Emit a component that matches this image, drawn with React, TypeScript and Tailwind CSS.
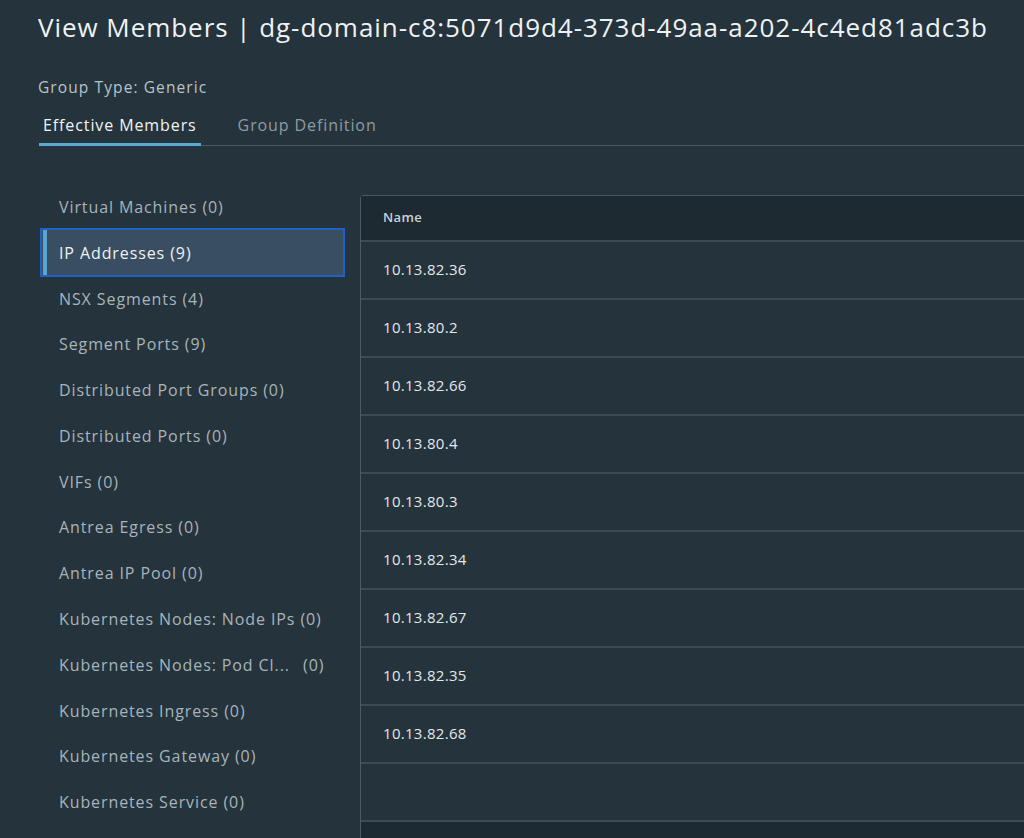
import React from 'react';

const categories = [
  { label: 'Virtual Machines', count: 0 },
  { label: 'IP Addresses', count: 9 },
  { label: 'NSX Segments', count: 4 },
  { label: 'Segment Ports', count: 9 },
  { label: 'Distributed Port Groups', count: 0 },
  { label: 'Distributed Ports', count: 0 },
  { label: 'VIFs', count: 0 },
  { label: 'Antrea Egress', count: 0 },
  { label: 'Antrea IP Pool', count: 0 },
  { label: 'Kubernetes Nodes: Node IPs', count: 0 },
  { label: 'Kubernetes Nodes: Pod Cl...', count: 0, truncated: true },
  { label: 'Kubernetes Ingress', count: 0 },
  { label: 'Kubernetes Gateway', count: 0 },
  { label: 'Kubernetes Service', count: 0 },
];

const addresses = [
  '10.13.82.36',
  '10.13.80.2',
  '10.13.82.66',
  '10.13.80.4',
  '10.13.80.3',
  '10.13.82.34',
  '10.13.82.67',
  '10.13.82.35',
  '10.13.82.68',
];

const App: React.FC = () => {
  const selected = 1;

  return (
    <div
      className="h-[838px] w-[1024px] overflow-hidden bg-[#25333c] text-[#e6ebee]"
      style={{ fontFamily: '"Open Sans", "Noto Sans", sans-serif' }}
    >
      {/* タイトル */}
      <h1 className="pl-[38px] pt-[9px] text-[26px] leading-[36px] font-normal tracking-[0.95px] text-[#eef2f4]">
        View Members | dg-domain-c8:5071d9d4-373d-49aa-a202-4c4ed81adc3b
      </h1>

      <div className="pl-[38px] mt-[32px] text-[15.5px] leading-[20px] tracking-[1.1px] text-[#b9c3c9]">
        Group Type: Generic
      </div>

      {/* タブ */}
      <div className="ml-[39px] mt-[17px] flex border-b border-[#4a5963]">
        <div className="-mb-px border-b-[3px] border-[#5aaad8] px-[4px] pb-[7px] text-[16px] leading-[22px] tracking-[0.9px] text-[#f0f3f5]">
          Effective Members
        </div>
        <div className="ml-[37px] pb-[7px] text-[16px] leading-[22px] tracking-[0.9px] text-[#8e9ba3]">
          Group Definition
        </div>
      </div>

      <div className="mt-[49px] flex">
        {/* カテゴリ一覧 */}
        <div className="ml-[40px] w-[305px] shrink-0 -mt-[11px]">
          {categories.map((c, i) =>
            i === selected ? (
              <div
                key={c.label}
                className="flex h-[49px] items-center border-2 border-[#1d62c9] bg-[#3a4e62] text-[16px] tracking-[0.9px] text-[#eef2f4]"
              >
                <div className="ml-px h-full w-[4px] bg-[#5ba4d2]" />
                <span className="ml-[12px]">
                  {c.label} ({c.count})
                </span>
              </div>
            ) : (
              <div
                key={c.label}
                className="flex h-[45.8px] items-center pl-[19px] text-[16px] tracking-[0.9px] text-[#a8b4bb]"
                style={i === selected + 1 ? { marginTop: '-1.6px' } : i === selected - 1 ? { marginBottom: '-1.6px' } : undefined}
              >
                {c.truncated ? (
                  <>
                    <span className="w-[244px] shrink-0">{c.label}</span>
                    <span>({c.count})</span>
                  </>
                ) : (
                  <span>
                    {c.label} ({c.count})
                  </span>
                )}
              </div>
            )
          )}
        </div>

        {/* メンバー表 */}
        <div className="ml-[15px] flex-1 rounded-tl-[4px] border-l border-t border-[#4b5b66]">
          <div className="flex h-[46px] items-center border-b-2 border-[#3d4b55] bg-[#1e2a32] pl-[22px] text-[13px] font-semibold tracking-[0.4px] text-[#c9d1d6]">
            Name
          </div>
          {addresses.map(ip => (
            <div
              key={ip}
              className="flex h-[58px] items-center border-b-2 border-[#3d4b55] pl-[22px] pb-[2px] text-[15px] tracking-[0.3px] text-[#e2e8eb]"
            >
              {ip}
            </div>
          ))}
          <div className="h-[58px] border-b-2 border-[#3d4b55]" />
          <div className="h-[40px] bg-[#1e2a32]" />
        </div>
      </div>
    </div>
  );
};

export default App;
